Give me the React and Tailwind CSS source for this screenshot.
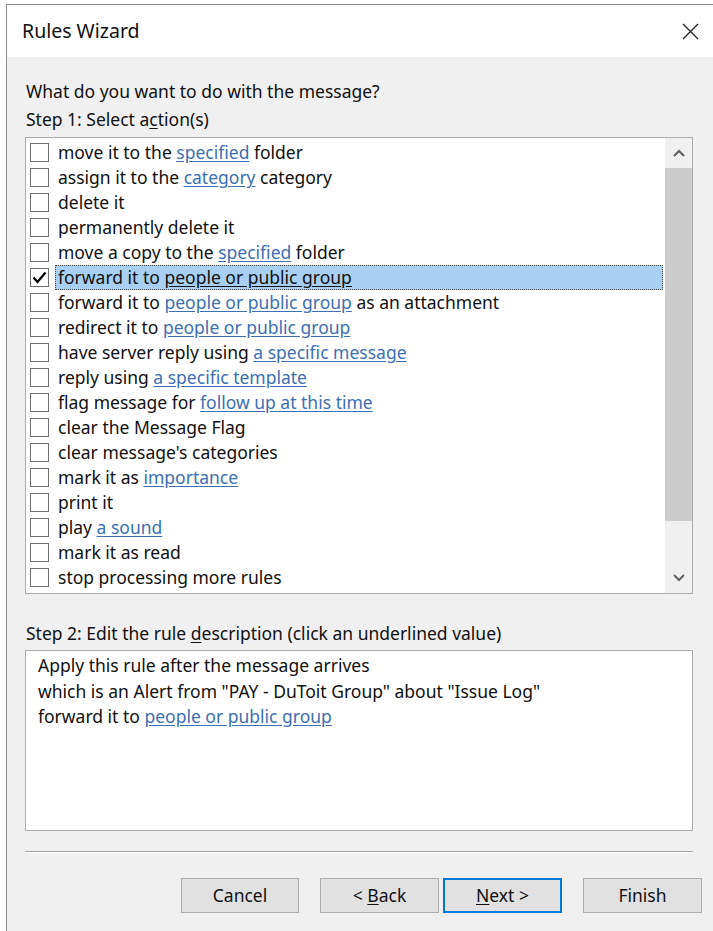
import React from "react";

const FONT = { fontFamily: '"Noto Sans", "Open Sans", sans-serif' };

const actions = [
  ["move it to the ", "specified", " folder"],
  ["assign it to the ", "category", " category"],
  ["delete it"],
  ["permanently delete it"],
  ["move a copy to the ", "specified", " folder"],
  ["forward it to ", "people or public group", ""],
  ["forward it to ", "people or public group", " as an attachment"],
  ["redirect it to ", "people or public group", ""],
  ["have server reply using ", "a specific message", ""],
  ["reply using ", "a specific template", ""],
  ["flag message for ", "follow up at this time", ""],
  ["clear the Message Flag"],
  ["clear message's categories"],
  ["mark it as ", "importance", ""],
  ["print it"],
  ["play ", "a sound", ""],
  ["mark it as read"],
  ["stop processing more rules"],
];

function Checkbox({ checked }) {
  return (
    <div className="w-[19px] h-[19px] shrink-0 border border-[#707070] bg-white flex items-center justify-center">
      {checked && (
        <svg width="15" height="13" viewBox="0 0 15 13">
          <polyline points="1.5,6.5 5.5,11 13.5,1.5" fill="none" stroke="#000" strokeWidth="2.2" />
        </svg>
      )}
    </div>
  );
}

function Row({ parts, selected }) {
  const [a, link, b] = parts;
  return (
    <div className="h-[25px] flex items-center pl-[4px]">
      <Checkbox checked={selected} />
      <div
        className={
          "ml-[6px] flex-1 h-[25px] flex items-center pl-[3px] whitespace-pre " +
          (selected ? "bg-[#a8d0f2] outline-1 outline-dotted outline-[#444] -outline-offset-1" : "")
        }
      >
        <span>{a}</span>
        {link && (
          <span className={selected ? "underline underline-offset-2 text-[#111]" : "underline underline-offset-2 text-[#3d6fb2]"}>
            {link}
          </span>
        )}
        {b && <span>{b}</span>}
      </div>
    </div>
  );
}

function Button({ children, primary, className = "" }) {
  return (
    <div
      className={
        "h-[35px] flex items-center justify-center bg-[#e1e1e1] text-[17.5px] text-[#111] " +
        (primary ? "border-2 border-[#0078d7] " : "border border-[#adadad] ") +
        className
      }
    >
      {children}
    </div>
  );
}

export default function App() {
  return (
    <div className="w-[713px] h-[931px] bg-white pt-[4px] pl-[6px] overflow-hidden" style={FONT}>
      <div className="h-full border-l border-t border-[#8c8c8c] flex flex-col">
        {/* title bar */}
        <div className="h-[52px] bg-white flex items-center justify-between pl-[15px] pr-[14px]">
          <span className="text-[19.5px] text-[#111]">Rules Wizard</span>
          <svg width="17" height="17" viewBox="0 0 17 17">
            <path d="M1 1 L16 16 M16 1 L1 16" stroke="#222" strokeWidth="1.3" />
          </svg>
        </div>

        {/* body */}
        <div className="flex-1 bg-[#f0f0f0] pl-[18px] pr-[20px] pt-[24px] text-[17.5px] text-[#111]">
          <div className="h-[20px] leading-[20px] pl-[1px]">What do you want to do with the message?</div>
          <div className="h-[20px] leading-[20px] mt-[8px] pl-[1px]">
            Step 1: Select a<span className="underline underline-offset-2">c</span>tion(s)
          </div>

          {/* action list */}
          <div className="mt-[8px] h-[457px] border border-[#acacac] bg-white flex">
            <div className="flex-1 pt-[2px] pr-[2px]">
              {actions.map((p, i) => (
                <Row key={i} parts={p} selected={i === 5} />
              ))}
            </div>
            <div className="w-[27px] bg-[#f0f0f0] flex flex-col">
              <div className="h-[30px] flex items-center justify-center">
                <svg width="12" height="8" viewBox="0 0 12 8">
                  <polyline points="1,7 6,2 11,7" fill="none" stroke="#606060" strokeWidth="2" />
                </svg>
              </div>
              <div className="h-[353px] bg-[#cdcdcd]" />
              <div className="flex-1" />
              <div className="h-[30px] flex items-center justify-center">
                <svg width="12" height="8" viewBox="0 0 12 8">
                  <polyline points="1,1 6,6 11,1" fill="none" stroke="#606060" strokeWidth="2" />
                </svg>
              </div>
            </div>
          </div>

          <div className="h-[20px] leading-[20px] mt-[29px] pl-[1px]">
            Step 2: Edit the rule <span className="underline underline-offset-2">d</span>escription (click an underlined value)
          </div>

          {/* rule description */}
          <div className="mt-[7px] h-[181px] border border-[#acacac] bg-white pl-[12px] pt-[2px]">
            <div className="h-[25.5px] leading-[25px]">Apply this rule after the message arrives</div>
            <div className="h-[25.5px] leading-[25px]">which is an Alert from "PAY - DuToit Group" about "Issue Log"</div>
            <div className="h-[25.5px] leading-[25px]">
              forward it to <span className="underline underline-offset-2 text-[#3d6fb2]">people or public group</span>
            </div>
          </div>

          <div className="mt-[20px] h-[2px] border-t border-[#a0a0a0] border-b border-b-white" />

          <div className="mt-[25px] flex justify-end -mr-[9px]">
            <Button className="w-[118px]">Cancel</Button>
            <Button className="w-[119px] ml-[21px]">
              &lt;&nbsp;<span className="underline underline-offset-2">B</span>ack
            </Button>
            <Button primary className="w-[119px] ml-[4px]">
              <span className="underline underline-offset-2">N</span>ext &gt;
            </Button>
            <Button className="w-[119px] ml-[21px]">Finish</Button>
          </div>
        </div>
      </div>
    </div>
  );
}
